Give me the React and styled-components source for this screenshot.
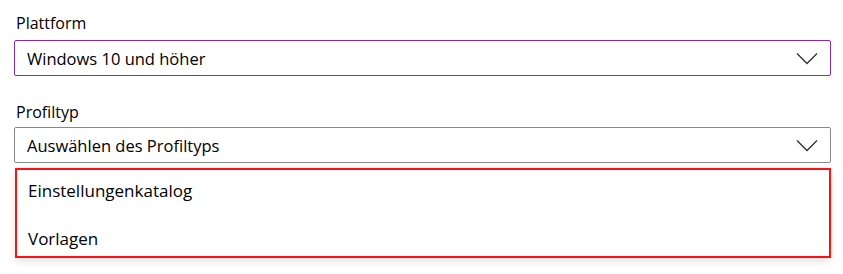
import React from 'react';
import styled, { createGlobalStyle } from 'styled-components';

const GlobalStyle = createGlobalStyle`
    body{
        margin:0;
        background:#fff;
        font-family:"Open Sans","Liberation Sans",sans-serif;
        color:#1b1a19;
    }
`

const Page = styled.div`
    width:843px;
    height:274px;
    padding:13px 12px 0 14px;
    box-sizing:border-box;
`

const Field = styled.div`
    display:flex;
    flex-direction:column;
    margin-bottom:${p => p.$last ? '0' : '26px'};
`

const Label = styled.label`
    font-size:16px;
    line-height:20px;
    color:#000;
    margin:0 0 ${p => p.$gap}px 2px;
`

const Select = styled.div`
    height:36px;
    box-sizing:border-box;
    border:1px solid ${p => p.$focused ? '#8a2aa8' : '#8a8886'};
    border-radius:2px;
    display:flex;
    align-items:center;
    justify-content:space-between;
    padding:1px 12px 0 12px;
    font-size:16.5px;
    color:#000;
`

const Chevron = () => (
    <svg width="22" height="13" viewBox="0 0 22 13">
        <path d="M1 1.5 L11 11.5 L21 1.5" fill="none" stroke="#323130" strokeWidth="1.3" />
    </svg>
)

const Listbox = styled.ul`
    list-style:none;
    margin:5px 0 0 1px;
    padding:5px 0 1px 0;
    border:2px solid #ff1111;
    box-shadow:0 3px 8px rgba(0,0,0,0.12);
    display:flex;
    flex-direction:column;
    gap:16px;
    background:#fff;
`

const Option = styled.li`
    line-height:32px;
    font-size:17px;
    padding-left:11px;
    color:#000;
`

const App = () => {
    return (
        <Page>
            <GlobalStyle />

            {/* ===== Plattform ===== */}
            <Field>
                <Label $gap={7}>Plattform</Label>
                <Select $focused>
                    <span>Windows 10 und höher</span>
                    <Chevron />
                </Select>
            </Field>

            {/* ===== Profiltyp ===== */}
            <Field $last>
                <Label $gap={5}>Profiltyp</Label>
                <Select>
                    <span>Auswählen des Profiltyps</span>
                    <Chevron />
                </Select>
                <Listbox>
                    <Option>Einstellungenkatalog</Option>
                    <Option>Vorlagen</Option>
                </Listbox>
            </Field>
        </Page>
    );
}

export default App
